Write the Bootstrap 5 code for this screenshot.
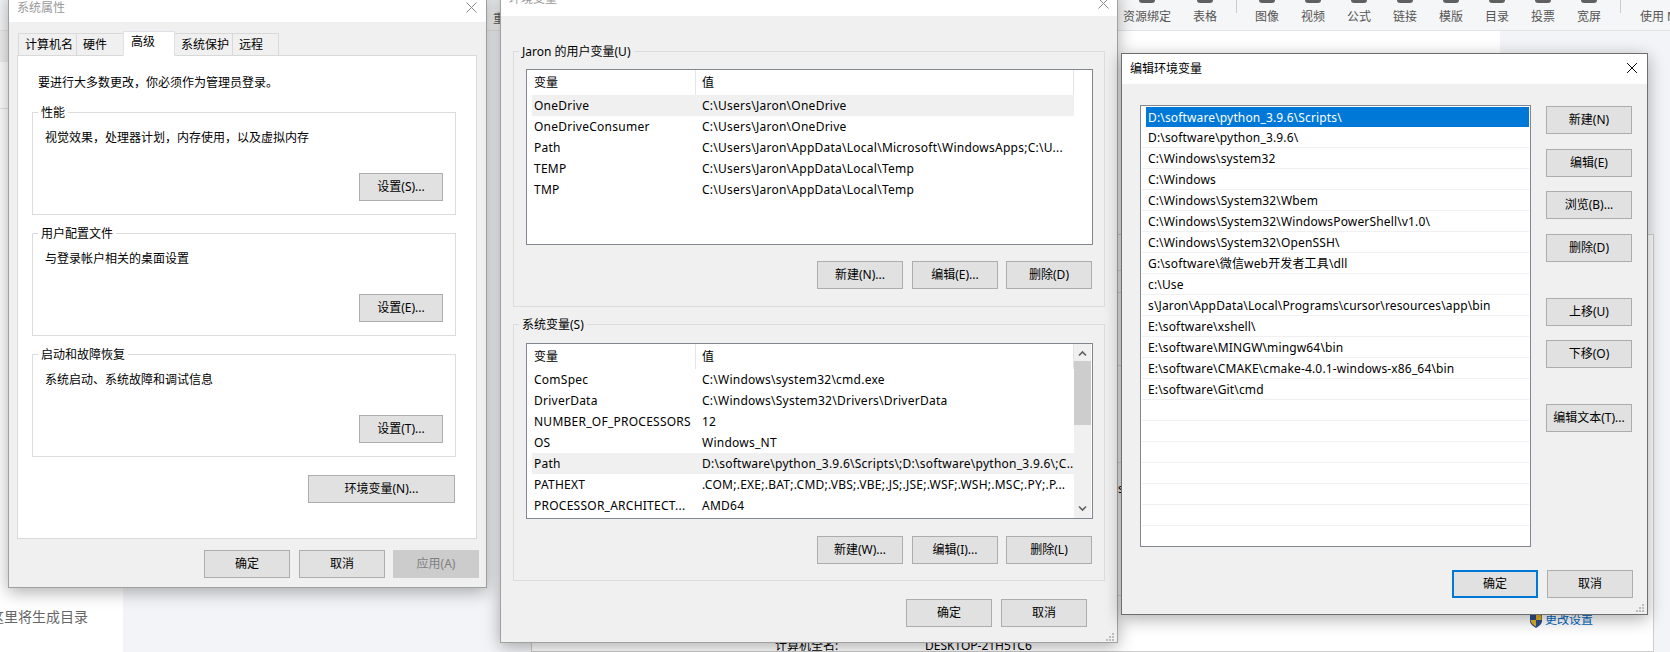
<!DOCTYPE html>
<html lang="zh-CN">
<head>
<meta charset="utf-8">
<title>环境变量</title>
<link href="https://cdn.jsdelivr.net/npm/bootstrap@5.3.0/dist/css/bootstrap.min.css" rel="stylesheet">
<style>
html,body{width:1670px;height:652px;overflow:hidden;margin:0}
body{background:#f3f4f7;font:12px/18px "Noto Sans","Noto Sans CJK SC",sans-serif;color:#000}
/* background app */
.pagewrap{width:1670px;height:652px;overflow:hidden}
.tbar{height:31px;background:#f5f6f7;border-bottom:1px solid #e3e3e3;color:#555;padding-left:493px;flex:none;overflow:hidden}
.tool{width:24px;margin-left:22px;white-space:nowrap;display:flex;flex-direction:column;align-items:center;flex:none}
.tool i{display:block;width:16px;height:3px;background:#606060;border-radius:0 0 3px 3px;margin-bottom:5px}
.tool span{display:block}
.tool-cut{margin-left:0;width:14px;overflow:hidden;display:block;margin-top:10px}
.tool-wide{margin-left:616px;width:48px}
.tool-after{margin-left:18px}
.tool-end{margin-left:19px;width:40px;align-items:flex-start}
.tool-end i{visibility:hidden}
.tsep{width:1px;height:13px;background:#ccc;margin-left:19px;flex:none}
.sidepane{width:123px;background:#fff;flex:none;overflow:hidden}
.sidetop{height:31px;background:#efefef}
.sideline{height:47px;border-bottom:1px solid #e6e6e6}
.sidetext{font-size:14px;color:#666;margin:498px 0 0 -10px;white-space:nowrap;line-height:20px}
.gutter{width:408px;flex:none}
.sheet{width:969px;height:203px;background:#fff;flex:none}
.infocard{width:1123px;height:418px;background:#fff;border:1px solid #ccc;border-top-color:#d4d4d4;flex:none;overflow:hidden}
.cline{height:1px;background:#ddd;width:10px;margin-left:585px}
.cl1{margin-top:35px}
.cl2{margin-top:21px}
.cl3{margin-top:72px}
.cl4{margin-top:96px}
.cl5{margin-top:98px}
.cletter{margin:17px 0 0 586px;height:17px;width:4px;overflow:hidden}
.infolink{color:#0067c0;margin-left:997px;margin-top:16px;height:16px;display:flex;align-items:center;gap:2px;white-space:nowrap}
.infoname{margin-left:243px;margin-top:9px;white-space:nowrap}
.infoname span{display:inline-block;width:150px}
/* windows */
.win{background:#f0f0f0;border:1px solid #a0a0a0;box-shadow:0 4px 16px rgba(0,0,0,.32)}
.win-active{border-color:#6e6e6e}
.wtitle{background:#fff;color:#999;white-space:nowrap}
.wclose{position:absolute}
.grip{position:absolute;right:3px;bottom:1px}
.wbtn.btn{background:#e1e1e1;border:1px solid #adadad;border-radius:0;color:#000;font-size:12px;line-height:16px;padding:0;height:28px;width:86px;display:inline-flex;align-items:center;justify-content:center;white-space:nowrap;flex:none}
.wbtn.w147{width:147px}
.wbtn.w84{width:84px}
.wbtn.btn:disabled,.wbtn.off{background:#ccc;border-color:#ccc;color:#7f7f7f;opacity:1}
.wbtn.primary{border:2px solid #0078d7}
/* dialog 1 */
#d1{left:8px;top:-8px;width:479px;height:596px}
#d1 .wtitle{height:29px;padding:6px 0 0 8px}
#d1 .wclose{right:9px;top:9px}
.tabs{margin-left:9px;margin-top:9px;height:25px;margin-bottom:-1px;border:0;position:relative;z-index:1;flex-wrap:nowrap}
.tabs .nav-link{background:#f0f0f0;border:1px solid #d9d9d9;border-radius:0;border-left-width:0;color:#000;padding:2px 0 0 6px;height:23px;margin:2px 0 0;font-size:12px;line-height:18px;white-space:nowrap}
.tabs .nav-item:first-child .nav-link{border-left-width:1px}
.tabs .nav-link.active{background:#fff;height:25px;margin-top:0;border-left-width:1px;border-bottom-color:#fff;padding-left:7px;margin-left:-1px;padding-top:1px}
.tw59{width:59px}.tw47{width:47px}.tw52{width:52px}.tw58{width:58px}.tw46{width:46px}
.tpanel{margin-left:8px;width:460px;height:484px;background:#fff;border:1px solid #d9d9d9;padding:18px 14px 0}
.intro{margin:0 0 20px 6px}
.gbox{position:relative;border:1px solid #dcdcdc;width:424px;height:103px;padding:16px 12px 13px;margin-bottom:18px}
.glabel{position:absolute;left:5px;top:-9px;padding:0 3px;background:#fff;white-space:nowrap}
.gbox2 .glabel{background:#f0f0f0}
.envrow{width:423px}
.d1foot{margin:11px 7px 0 0}
.gap9{margin-right:9px}
.gap8{margin-right:8px}
/* dialog 2 */
#d2{left:500px;top:-10px;width:618px;height:653px}
#d2 .wtitle{height:25px;padding:0 0 0 8px;line-height:16px;color:#999}
#d2 .wclose{right:8px;top:7px}
.d2body{padding:35px 12px 0}
.gbox2{width:592px;height:256px;padding:17px 12px 0;margin:0;border-color:#dcdcdc}
.gbox2+.gbox2{margin-top:17px;height:257px;padding-top:18px}
.gbox2+.gbox2 .btnrow{margin-top:17px}
.lview{height:176px;background:#fff;border:1px solid #82878f;padding-left:5px;position:relative;width:567px}
.lhead{height:25px;width:542px;background:#fff;display:flex;align-items:center;border-right:1px solid #e5e5e5}
.lhead .c1,.lrow .c1{width:164px;padding-left:2px;flex:none;white-space:nowrap;overflow:hidden}
.lhead .c1{height:25px;line-height:25px;border-right:1px solid #e5e5e5}
.lhead .c2,.lrow .c2{padding-left:6px;white-space:nowrap;overflow:hidden;flex:1 1 0}
.lrow{height:21px;width:542px;display:flex;line-height:21px;letter-spacing:.25px}
.lrow.hl{background:#f0f0f0}
.btnrow{margin-top:16px}
.sbar{position:absolute;right:1px;top:0;bottom:0;width:17px;background:#f0f0f0}
.sarrow{display:block;margin:6px auto 0}
.sthumb{height:64px;background:#cdcdcd;margin-top:4px}
.sdown{position:absolute;left:4px;bottom:6px}
.d2foot{margin:18px 18px 0 0}
/* dialog 3 */
#d3{left:1121px;top:53px;width:527px;height:562px}
#d3 .wtitle{height:30px;line-height:30px;padding-left:8px;color:#000}
#d3 .wclose{right:9px;top:8px}
#d3 .grip{bottom:2px}
.d3main{padding:21px 15px 0 18px;gap:15px}
.elist{width:392px;height:442px;background:#fff;border:1px solid #82878f;padding:0 1px}
.erow{height:21px;line-height:22px;border-bottom:1px solid #f0f0f0;padding-left:6px;white-space:nowrap;overflow:hidden;letter-spacing:.15px}
.erow.sel{background:#0078d7;color:#fff;margin-left:4px;padding-left:2px;border-top:1px solid #fff;border-bottom:0;line-height:21px;background-clip:padding-box}
.ebtns{padding-top:1px}
.m14{margin-top:14px}
.m15{margin-top:15px}
.m36{margin-top:36px}
.d3foot{margin:23px 14px 0 0}
</style>
</head>
<body>
<div class="pagewrap d-flex flex-column">
  <div class="tbar d-flex">
    <div class="tool tool-cut">重</div>
    <div class="tool tool-wide"><i></i><span>资源绑定</span></div>
    <div class="tool"><i></i><span>表格</span></div>
    <div class="tsep"></div>
    <div class="tool tool-after"><i></i><span>图像</span></div>
    <div class="tool"><i></i><span>视频</span></div>
    <div class="tool"><i></i><span>公式</span></div>
    <div class="tool"><i></i><span>链接</span></div>
    <div class="tool"><i></i><span>模版</span></div>
    <div class="tool"><i></i><span>目录</span></div>
    <div class="tool"><i></i><span>投票</span></div>
    <div class="tool"><i></i><span>宽屏</span></div>
    <div class="tsep"></div>
    <div class="tool tool-end"><i></i><span>使用 M</span></div>
  </div>
  <div class="d-flex flex-grow-1">
    <div class="sidepane">
      <div class="sidetop"></div>
      <div class="sideline"></div>
      <div class="sidetext">这里将生成目录</div>
    </div>
    <div class="gutter"></div>
    <div class="d-flex flex-column">
      <div class="sheet"></div>
      <div class="infocard">
        <div class="cline cl1"></div>
        <div class="cline cl2"></div>
        <div class="cline cl3"></div>
        <div class="cline cl4"></div>
        <div class="cletter">s</div>
        <div class="cline cl5"></div>
        <div class="infolink">
          <svg width="14" height="15" viewBox="0 0 14 15"><path d="M1 2 7 0l6 2v6c0 3-3 5-6 7-3-2-6-4-6-7z" fill="#2b4f8c"/><path d="M7 1v6h5.500V2.500zM7 7H1.500c.3 3 2.800 4.800 5.500 6.500z" fill="#e8b020"/></svg>
          <span>更改设置</span>
        </div>
        <div class="infoname"><span>计算机全名:</span>DESKTOP-21H5TC6</div>
      </div>
    </div>
  </div>
</div>

<!-- 系统属性 -->
<div id="d1" class="win position-absolute d-flex flex-column">
  <div class="wtitle">系统属性</div>
  <svg class="wclose" width="11" height="11" viewBox="0 0 11 11"><path d="M.5.5l10 10M10.500.5l-10 10" stroke="#8a8a8a" fill="none"/></svg>
  <ul class="nav nav-tabs tabs">
    <li class="nav-item"><a class="nav-link tw59">计算机名</a></li>
    <li class="nav-item"><a class="nav-link tw47">硬件</a></li>
    <li class="nav-item"><a class="nav-link active tw52">高级</a></li>
    <li class="nav-item"><a class="nav-link tw58">系统保护</a></li>
    <li class="nav-item"><a class="nav-link tw46">远程</a></li>
  </ul>
  <div class="tpanel d-flex flex-column">
    <p class="intro">要进行大多数更改，你必须作为管理员登录。</p>
    <div class="gbox d-flex flex-column justify-content-between align-items-start">
      <span class="glabel">性能</span>
      <div>视觉效果，处理器计划，内存使用，以及虚拟内存</div>
      <button class="btn wbtn w84 align-self-end">设置(S)...</button>
    </div>
    <div class="gbox d-flex flex-column justify-content-between align-items-start">
      <span class="glabel">用户配置文件</span>
      <div>与登录帐户相关的桌面设置</div>
      <button class="btn wbtn w84 align-self-end">设置(E)...</button>
    </div>
    <div class="gbox d-flex flex-column justify-content-between align-items-start">
      <span class="glabel">启动和故障恢复</span>
      <div>系统启动、系统故障和调试信息</div>
      <button class="btn wbtn w84 align-self-end">设置(T)...</button>
    </div>
    <div class="envrow d-flex justify-content-end"><button class="btn wbtn w147">环境变量(N)...</button></div>
  </div>
  <div class="d1foot d-flex justify-content-end">
    <button class="btn wbtn gap9">确定</button>
    <button class="btn wbtn gap8">取消</button>
    <button class="btn wbtn off" disabled>应用(A)</button>
  </div>
</div>

<!-- 环境变量 -->
<div id="d2" class="win position-absolute d-flex flex-column">
  <div class="wtitle">环境变量</div>
  <svg class="wclose" width="11" height="11" viewBox="0 0 11 11"><path d="M.5.5l10 10M10.500.5l-10 10" stroke="#8a8a8a" fill="none"/></svg>
  <div class="d2body">
    <div class="gbox gbox2">
      <span class="glabel">Jaron 的用户变量(U)</span>
      <div class="lview">
        <div class="lhead"><div class="c1">变量</div><div class="c2">值</div></div>
        <div class="lrow hl"><div class="c1">OneDrive</div><div class="c2">C:\Users\Jaron\OneDrive</div></div>
        <div class="lrow"><div class="c1">OneDriveConsumer</div><div class="c2">C:\Users\Jaron\OneDrive</div></div>
        <div class="lrow"><div class="c1">Path</div><div class="c2">C:\Users\Jaron\AppData\Local\Microsoft\WindowsApps;C:\U...</div></div>
        <div class="lrow"><div class="c1">TEMP</div><div class="c2">C:\Users\Jaron\AppData\Local\Temp</div></div>
        <div class="lrow"><div class="c1">TMP</div><div class="c2">C:\Users\Jaron\AppData\Local\Temp</div></div>
      </div>
      <div class="btnrow d-flex justify-content-end">
        <button class="btn wbtn gap9">新建(N)...</button>
        <button class="btn wbtn gap8">编辑(E)...</button>
        <button class="btn wbtn">删除(D)</button>
      </div>
    </div>
    <div class="gbox gbox2">
      <span class="glabel">系统变量(S)</span>
      <div class="lview">
        <div class="lhead"><div class="c1">变量</div><div class="c2">值</div></div>
        <div class="lrow"><div class="c1">ComSpec</div><div class="c2">C:\Windows\system32\cmd.exe</div></div>
        <div class="lrow"><div class="c1">DriverData</div><div class="c2">C:\Windows\System32\Drivers\DriverData</div></div>
        <div class="lrow"><div class="c1">NUMBER_OF_PROCESSORS</div><div class="c2">12</div></div>
        <div class="lrow"><div class="c1">OS</div><div class="c2">Windows_NT</div></div>
        <div class="lrow hl"><div class="c1">Path</div><div class="c2">D:\software\python_3.9.6\Scripts\;D:\software\python_3.9.6\;C...</div></div>
        <div class="lrow"><div class="c1">PATHEXT</div><div class="c2">.COM;.EXE;.BAT;.CMD;.VBS;.VBE;.JS;.JSE;.WSF;.WSH;.MSC;.PY;.P...</div></div>
        <div class="lrow"><div class="c1">PROCESSOR_ARCHITECT...</div><div class="c2">AMD64</div></div>
        <div class="sbar">
          <svg class="sarrow" width="9" height="7" viewBox="0 0 9 7"><path d="M1 5.500 4.500 2 8 5.500" fill="none" stroke="#606060" stroke-width="1.600"/></svg>
          <div class="sthumb"></div>
          <svg class="sdown" width="9" height="7" viewBox="0 0 9 7"><path d="M1 1.500 4.500 5 8 1.500" fill="none" stroke="#606060" stroke-width="1.600"/></svg>
        </div>
      </div>
      <div class="btnrow d-flex justify-content-end">
        <button class="btn wbtn gap9">新建(W)...</button>
        <button class="btn wbtn gap8">编辑(I)...</button>
        <button class="btn wbtn">删除(L)</button>
      </div>
    </div>
    <div class="d2foot d-flex justify-content-end">
      <button class="btn wbtn gap9">确定</button>
      <button class="btn wbtn">取消</button>
    </div>
  </div>
  <svg class="grip" width="8" height="8" viewBox="0 0 8 8" fill="#bdbdbd"><path d="M6 0h2v2H6zM3 3h2v2H3zM6 3h2v2H6zM0 6h2v2H0zM3 6h2v2H3zM6 6h2v2H6z"/></svg>
</div>

<!-- 编辑环境变量 -->
<div id="d3" class="win win-active position-absolute d-flex flex-column">
  <div class="wtitle">编辑环境变量</div>
  <svg class="wclose" width="12" height="12" viewBox="0 0 12 12"><path d="M1 1l10 10M11 1 1 11" stroke="#111" fill="none"/></svg>
  <div class="d3main d-flex">
    <div class="elist">
      <div class="erow sel">D:\software\python_3.9.6\Scripts\</div>
      <div class="erow">D:\software\python_3.9.6\</div>
      <div class="erow">C:\Windows\system32</div>
      <div class="erow">C:\Windows</div>
      <div class="erow">C:\Windows\System32\Wbem</div>
      <div class="erow">C:\Windows\System32\WindowsPowerShell\v1.0\</div>
      <div class="erow">C:\Windows\System32\OpenSSH\</div>
      <div class="erow">G:\software\微信web开发者工具\dll</div>
      <div class="erow">c:\Use</div>
      <div class="erow">s\Jaron\AppData\Local\Programs\cursor\resources\app\bin</div>
      <div class="erow">E:\software\xshell\</div>
      <div class="erow">E:\software\MINGW\mingw64\bin</div>
      <div class="erow">E:\software\CMAKE\cmake-4.0.1-windows-x86_64\bin</div>
      <div class="erow">E:\software\Git\cmd</div>
      <div class="erow"></div><div class="erow"></div><div class="erow"></div>
      <div class="erow"></div><div class="erow"></div><div class="erow"></div>
    </div>
    <div class="ebtns d-flex flex-column">
      <button class="btn wbtn">新建(N)</button>
      <button class="btn wbtn m15">编辑(E)</button>
      <button class="btn wbtn m14">浏览(B)...</button>
      <button class="btn wbtn m15">删除(D)</button>
      <button class="btn wbtn m36">上移(U)</button>
      <button class="btn wbtn m14">下移(O)</button>
      <button class="btn wbtn m36">编辑文本(T)...</button>
    </div>
  </div>
  <div class="d3foot d-flex justify-content-end">
    <button class="btn wbtn primary gap9">确定</button>
    <button class="btn wbtn">取消</button>
  </div>
  <svg class="grip" width="8" height="8" viewBox="0 0 8 8" fill="#bdbdbd"><path d="M6 0h2v2H6zM3 3h2v2H3zM6 3h2v2H6zM0 6h2v2H0zM3 6h2v2H3zM6 6h2v2H6z"/></svg>
</div>
<script src="https://cdn.jsdelivr.net/npm/bootstrap@5.3.0/dist/js/bootstrap.bundle.min.js"></script>
</body>
</html>
